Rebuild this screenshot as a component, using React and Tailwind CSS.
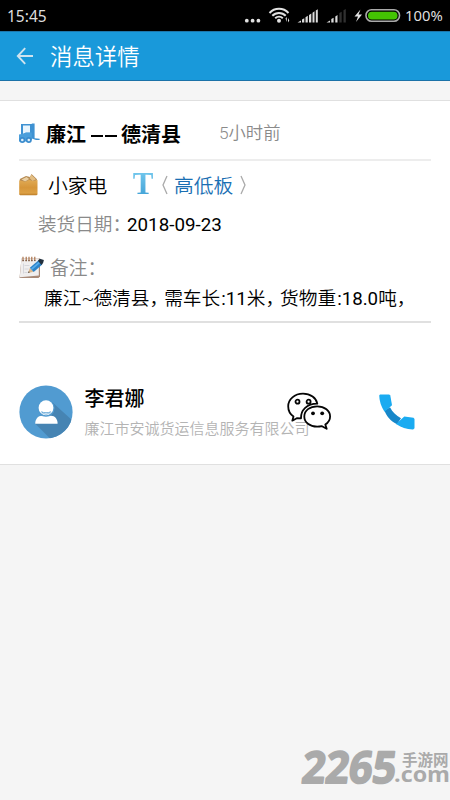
const StatusIcons = () => (
  <svg width="154" height="31" viewBox="0 0 154 31" className="shrink-0 overflow-visible">
    <g fill="#e2e2e2">
      <circle cx="-2.2" cy="20.7" r="1.9" />
      <circle cx="3.6" cy="20.7" r="1.9" />
      <circle cx="9.4" cy="20.7" r="1.9" />
      <circle cx="30" cy="20.8" r="2" />
      <path d="M36.5 18.5l1.3-1.5v5zM39 18l1.3 2.5-1.3 2z" />
    </g>
    <g fill="none" stroke="#e2e2e2" strokeWidth="2">
      <path d="M20.5 13a13 13 0 0 1 19 0" />
      <path d="M23.3 15.8a9.2 9.2 0 0 1 13.4 0" />
      <path d="M26.2 18.3a5.6 5.6 0 0 1 7.6 0" />
    </g>
    <g fill="#dcdcdc">
      <path d="M48.5 22.500l3.500-2v2zM53 22.500v-3l2.300-1.300v4.300zM56.500 22.500v-5.200l2.300-1.500v6.700zM60 22.500v-7.500l2.300-1.500v9zM63.500 22.500v-9.700l2-1.500v11.200zM66.800 22.500v-12l2-1.300v13.300z" />
      <path d="M77.500 22.500l3.500-2v2zM82.300 22.500v-3.400l2.300-1.400v4.800zM86.300 22.500v-6l2.200-1.400v7.400z" />
    </g>
    <path d="M90.300 22.500v-9.500l2.400-1.300v10.800zM94.500 22.500v-12.200l2.300-1.300v13.500z" fill="#303030" />
    <path d="M111.500 9.500l-6 7h3.500l-2 5.500 6-7.500h-3.500z" fill="#e2e2e2" />
    <rect x="117" y="9.700" width="33.500" height="11.600" rx="5.500" fill="none" stroke="#a9a9a9" strokeWidth="1.600" />
    <rect x="119" y="11.700" width="29.500" height="7.800" rx="3.800" fill="#44c303" />
  </svg>
);

const BackArrow = () => (
  <svg width="18" height="18" viewBox="0 0 18 18" fill="none" stroke="#cfe3ee" strokeWidth="1.9">
    <path d="M9.2 1.2L1.8 9l7.4 7.8M2 9h15" />
  </svg>
);

const ForkliftIcon = () => (
  <svg width="21" height="21" viewBox="0 0 21 21" className="shrink-0">
    <path d="M2 1h11.500v12.500L2 12z" fill="#3f92d2" />
    <path d="M4 2.500h7v7.300H6.700L4 11z" fill="#e9f5fd" />
    <path d="M0 11.500l4-.8 3-1.200h6v7l-2 2H0z" fill="#4b9fdb" />
    <path d="M12.800.5h2.800v14.800l5 .5v1.200h-3.600l-4.200-1.500z" fill="#3f92d2" />
    <circle cx="3.300" cy="17" r="3" fill="#3b8ccd" />
    <circle cx="3.300" cy="17" r="1.300" fill="#dff0fb" />
    <circle cx="9.800" cy="17" r="3" fill="#3b8ccd" />
    <circle cx="9.800" cy="17" r="1.300" fill="#dff0fb" />
  </svg>
);

const BoxIcon = () => (
  <svg width="19" height="23" viewBox="0 0 19 23" className="-mt-0.5 shrink-0">
    <defs>
      <linearGradient id="box" x1="0" y1="0" x2="0" y2="1">
        <stop offset="0" stopColor="#e0aa55" />
        <stop offset=".5" stopColor="#d6963a" />
        <stop offset=".85" stopColor="#dca044" />
        <stop offset="1" stopColor="#b97a26" />
      </linearGradient>
    </defs>
    <path d="M.8 6L7 3l4 1 1.500-3L18 6.200 17 9H1z" fill="#b58a52" />
    <path d="M2.500 6.500L7.500 4l2.700 2-4 2.600z" fill="#ead0a4" />
    <path d="M12.300 1.800l4.700 4.500-3.500 1.800-3-3z" fill="#e3be83" />
    <path d="M.2 7.300l6 1.500 4.200-2 3.200 1.200 4.900-1v14.500l-1 .8H1.200l-1-.8z" fill="url(#box)" />
  </svg>
);

const LetterIcon = () => (
  <span className="-mt-[3px] flex h-[32px] w-5 shrink-0 items-center justify-center bg-linear-to-b from-[#79cdf0] to-[#389cd3] bg-clip-text font-['Liberation_Serif',serif] text-[31px] leading-[32px] font-bold text-transparent">
    T
  </span>
);

const NoteIcon = () => (
  <svg width="25" height="23" viewBox="0 0 25 23" className="-mt-0.5 shrink-0">
    <path d="M2.500 2.500H21v18L19.500 22H.5z" fill="#a98a78" />
    <path d="M2.500 2.500h17.300v17L.8 21.200z" fill="#f0eeee" />
    <path d="M4.500 7.500v10M5.500 9.500h5M5.500 13h4M5.500 16.500h3" stroke="#cfcfd6" strokeWidth=".8" />
    <path d="M4 .8v4.400M7.200.8v4.400M10 .8v4.400M12.800.8v4.400M15.800.8v4" stroke="#a4693f" strokeWidth="1.100" />
    <path d="M3.500 4.600h13.500" stroke="#6e5240" strokeWidth="1" strokeDasharray="1.400 1.500" />
    <path d="M9 17l1.800-5 3.800 3.800z" fill="#dfb98c" />
    <path d="M10.800 11.800l8.500-7.300 4 4-8.600 7.500z" fill="#2b83c8" />
    <path d="M12 12.500l8.200-7 1.200 1.300-8.200 7z" fill="#57aceb" />
    <path d="M18.900 4.700l2-2 4 1.400-.8 3-1.600 1.800z" fill="#23313e" />
    <path d="M9 17l.8-1.800 1 1.100z" fill="#333" />
  </svg>
);

const Avatar = () => (
  <svg width="54" height="54" viewBox="0 0 54 54" className="-ml-[0.5px] shrink-0">
    <defs>
      <clipPath id="disc">
        <circle cx="27" cy="27" r="26.600" />
      </clipPath>
    </defs>
    <g clipPath="url(#disc)">
      <rect width="54" height="54" fill="#519bd1" />
      <path d="M33 17l21 19v18H31.500L16 38.500z" fill="#4684b3" />
    </g>
    <path d="M16.200 38.800c0-4.600 2.800-8 6.800-8h9c4 0 6.600 3.400 6.600 8z" fill="#fff" />
    <circle cx="27" cy="23.200" r="8.600" fill="#519bd1" />
    <ellipse cx="27" cy="22.700" rx="7.400" ry="7.500" fill="#fff" />
    <path d="M22 26.200c3 1.300 7.200 1.300 10.200 0-1 2.300-2.800 3.200-5.100 3.200s-4.200-.9-5.100-3.200z" fill="#519bd1" />
    <path d="M23.700 27.900c2.200.6 4.400.6 6.800 0" stroke="#fff" strokeWidth=".8" fill="none" />
  </svg>
);

const WechatIcon = () => (
  <svg width="46" height="40" viewBox="0 0 46 40" fill="none" stroke="#050505" strokeWidth="1.800" strokeLinejoin="round">
    <path d="M14 26.300c-.3-8.300 6-14.600 16.300-14.600C29.300 6 23.500 1.700 16 1.700 7.600 1.700 1.200 7.300 1.200 14.300c0 4.500 2 8 5.300 10.300L5.300 28.700l4.500-2.500z" />
    <path d="M30.200 14.300c7.400 0 12.900 4.500 12.900 10.100 0 3.500-1.900 6.200-4.800 8.100l1.400 4.300-4.700-2.600c-1.500.3-3.100.5-4.800.5-7.500 0-12.900-4.400-12.900-10.300s5.500-10.100 12.900-10.100z" />
    <circle cx="10.500" cy="9.700" r="2" />
    <circle cx="21.600" cy="9.700" r="2" />
    <circle cx="26" cy="21.300" r="1.900" fill="#050505" stroke="none" />
    <circle cx="35.200" cy="21.300" r="1.900" fill="#050505" stroke="none" />
  </svg>
);

const PhoneIcon = () => (
  <svg width="38" height="38" viewBox="0 0 38 38">
    <path d="M6.500 17.500l5.500-3.200c2.500 5 6 8.200 11 11l-4 5.900C13 28.500 8.500 23.500 6.500 17.500z" fill="#1787c9" />
    <path d="M2 1.500h9.200l1.100.9 1.700 9.800-7.500 6.600C3 13 1.400 8 1.200 2.400z" fill="#1aabf1" />
    <path d="M26.300 23.500l9.200 1.300 1 1.200v9.300l-1.400 1.200C28.500 36.600 23.500 34.500 18 31z" fill="#1aabf1" />
  </svg>
);

const Comma = () => <span className="-tracking-[4px]">，</span>;

export default function App() {
  return (
    <main className="flex h-[800px] w-[450px] flex-col overflow-hidden bg-[#f5f5f5] font-['Roboto','Noto_Sans_CJK_SC',sans-serif] text-black whitespace-nowrap">
      <div className="flex h-[31px] shrink-0 items-center bg-black pl-[7px] text-[#dedede]">
        <span className="w-[242px] pt-0.5 font-['Noto_Sans',sans-serif] text-[15.500px]">15:45</span>
        <StatusIcons />
        <span className="pl-[2px] font-['Noto_Sans',sans-serif] text-[14.800px]">100%</span>
      </div>

      <header className="flex h-[50px] shrink-0 items-center border-t border-b border-t-[#1d76ab] border-b-[#1b72a8] bg-[#1999da] pl-4">
        <BackArrow />
        <h1 className="ml-4 pt-[3px] text-[22.400px] font-[350] text-white">消息详情</h1>
      </header>

      <section className="mt-[19px] h-[365px] shrink-0 border-y border-[#e0e0e0] bg-white px-[19px]">
        <div className="flex h-[60px] items-center border-b-2 border-[#ededed] pt-1.5">
          <ForkliftIcon />
          <span className="ml-1.5 w-[45px] pt-1 text-[20px] font-bold">廉江</span>
          <span className="flex w-[30px] gap-[2px] pt-1.5">
            <i className="h-0.5 w-3 bg-black" />
            <i className="h-0.5 w-3 bg-black" />
          </span>
          <span className="w-[98px] pt-1 text-[20px] font-bold">德清县</span>
          <span className="pt-[1px] text-[17.300px] font-[350] text-[#8a8a8a]">5小时前</span>
        </div>

        <div className="flex h-12 items-center text-[19.800px] font-[350]">
          <BoxIcon />
          <span className="ml-2.5 w-[85px] pt-[3px]">小家电</span>
          <LetterIcon />
          <svg width="8" height="20" viewBox="0 0 8 20" className="ml-2 fill-none stroke-[#aaa]">
            <path d="M6 1L2 10l4 9" strokeWidth="1.300" />
          </svg>
          <span className="ml-[5px] pt-[3px] text-[#1a6fb3]">高低板</span>
          <svg width="8" height="20" viewBox="0 0 8 20" className="ml-[6px] fill-none stroke-[#aaa]">
            <path d="M2 1l4 9-4 9" strokeWidth="1.300" />
          </svg>
        </div>

        <div className="flex h-[30px] items-center pt-[3px] pl-[19px] text-[18.600px]">
          <span className="w-[89px] font-[350] text-[#8a8a8a]">装货日期：</span>
          <span className="text-[18.800px]">2018-09-23</span>
        </div>

        <div className="mt-3 flex h-[34px] items-center">
          <NoteIcon />
          <span className="ml-1.5 pt-[3px] text-[18.800px] font-[350] text-[#8a8a8a]">备注：</span>
        </div>

        <p className="flex h-[38px] items-center border-b-2 border-[#e0e0e0] pb-[7px] pl-[25px] text-[18.700px] font-[350]">
          廉江<span className="w-3">~</span>德清县<Comma />需车长<span className="pl-px font-normal">:11</span>米<Comma />货物重<span className="pl-px font-normal">:18.0</span>吨<Comma />
        </p>

        <div className="flex h-[140px] items-center pt-[38px]">
          <Avatar />
          <div className="ml-3 w-[202.500px] pt-1">
            <h2 className="text-[20px] leading-[30px] font-medium">李君娜</h2>
            <p className="text-[15px] leading-[30px] font-[350] text-[#b4b4b4]">廉江市安诚货运信息服务有限公司</p>
          </div>
          <button className="z-10">
            <WechatIcon />
          </button>
          <button className="ml-[45px]">
            <PhoneIcon />
          </button>
        </div>
      </section>

      <footer className="mt-auto flex h-[54px] items-start pl-[300px] leading-none font-bold text-[#aaa]">
        <svg width="98" height="44" viewBox="0 0 98 44" className="shrink-0 overflow-visible">
          <text x="5" y="37" fontSize="44" fontFamily="Open Sans, sans-serif" fontWeight="700" fill="#aaa" stroke="#aaa" strokeWidth="1.800" strokeLinejoin="round" textLength="94" lengthAdjust="spacingAndGlyphs" transform="skewX(-7)">2265</text>
        </svg>
        <div className="-ml-[3px] flex flex-col pt-[5px]">
          <span className="pl-[7px] font-['Noto_Sans_CJK_SC',sans-serif] text-[15.500px] leading-4">手游网</span>
          <svg width="55" height="16" viewBox="0 0 55 16" className="overflow-visible">
            <text x="-1" y="14.500" fontSize="22" fontFamily="Open Sans, sans-serif" fontWeight="700" fill="#aaa" textLength="56" lengthAdjust="spacingAndGlyphs">.com</text>
          </svg>
        </div>
      </footer>
    </main>
  );
}
